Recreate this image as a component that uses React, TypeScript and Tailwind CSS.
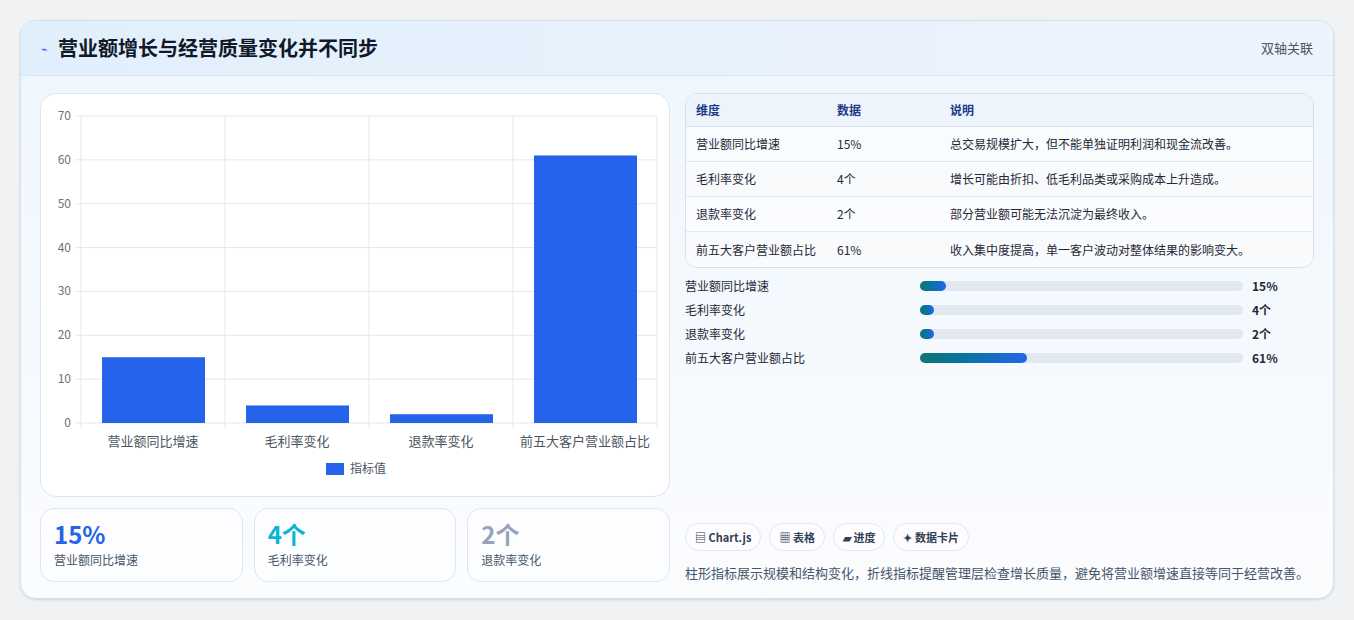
import React from "react";

const F = { fontFamily: '"Noto Sans CJK SC","Noto Sans",sans-serif' };

function Chart() {
  const x0 = 40, y0 = 22, h = 307, w = 576; // within svg coords
  const unit = h / 70;
  const vals = [15, 4, 2, 61];
  const labels = ["营业额同比增速", "毛利率变化", "退款率变化", "前五大客户营业额占比"];
  return (
    <svg width="628" height="402" className="block">
      {[0, 10, 20, 30, 40, 50, 60, 70].map((v) => {
        const y = y0 + h - v * unit;
        return (
          <g key={v}>
            <line x1={x0 - 6} x2={x0 + w} y1={y} y2={y} stroke="#e5e7eb" />
            <text x={x0 - 10} y={y + 4} textAnchor="end" fontSize="12" fill="#6b7280">{v}</text>
          </g>
        );
      })}
      {[0, 1, 2, 3, 4].map((i) => (
        <line key={i} x1={x0 + i * 144} x2={x0 + i * 144} y1={y0} y2={y0 + h + 6} stroke="#e5e7eb" />
      ))}
      {vals.map((v, i) => (
        <rect key={i} x={x0 + i * 144 + 21} y={y0 + h - v * unit} width={103} height={v * unit} fill="#2563eb" />
      ))}
      {labels.map((l, i) => (
        <text key={i} x={x0 + i * 144 + 72} y={y0 + h + 23} textAnchor="middle" fontSize="13" fill="#4b5563">{l}</text>
      ))}
      <rect x={285} y={y0 + h + 40} width={18} height={12} fill="#2563eb" />
      <text x={309} y={y0 + h + 50} fontSize="12" fill="#4b5563">指标值</text>
    </svg>
  );
}

const rows = [
  ["营业额同比增速", "15%", "总交易规模扩大，但不能单独证明利润和现金流改善。"],
  ["毛利率变化", "4个", "增长可能由折扣、低毛利品类或采购成本上升造成。"],
  ["退款率变化", "2个", "部分营业额可能无法沉淀为最终收入。"],
  ["前五大客户营业额占比", "61%", "收入集中度提高，单一客户波动对整体结果的影响变大。"],
];
const bars: [string, string, number][] = [
  ["营业额同比增速", "15%", 26],
  ["毛利率变化", "4个", 14],
  ["退款率变化", "2个", 14],
  ["前五大客户营业额占比", "61%", 107],
];

export default function App() {
  return (
    <div style={F} className="w-[1354px] h-[620px] bg-[#f1f2f4] pt-[20px] pl-[20px]">
      <div className="w-[1314px] h-[579px] rounded-[16px] border border-[#cfe3ef] overflow-hidden bg-gradient-to-b from-[#eef6fd] to-[#fbfcfe] shadow-sm">
        <div className="h-[55px] flex items-center justify-between px-[20px] bg-gradient-to-r from-[#e1effc] to-[#eef4fd] border-b border-[#d6e6f3]">
          <div className="flex items-center gap-[10px]">
            <span className="text-[#2563eb] text-[11px]">⌁</span>
            <span className="text-[20px] font-bold text-[#111827]">营业额增长与经营质量变化并不同步</span>
          </div>
          <span className="text-[13px] text-[#4b5563]">双轴关联</span>
        </div>
        <div className="flex gap-[15px] px-[19px] pt-[17px]">
          <div className="w-[630px] flex flex-col gap-[11px]">
            <div className="h-[404px] rounded-[16px] border border-[#dde6ef] bg-white">
              <Chart />
            </div>
            <div className="flex gap-[11px]">
              {[["15%", "text-[#2563eb]", "营业额同比增速"], ["4个", "text-[#06b6d4]", "毛利率变化"], ["2个", "text-[#94a3b8]", "退款率变化"]].map(([v, c, l]) => (
                <div key={l} className="flex-1 h-[74px] rounded-[14px] border border-[#dde6ef] bg-white/60 px-[13px] pt-[10px]">
                  <div className={`text-[24px] leading-[30px] font-bold ${c}`}>{v}</div>
                  <div className="text-[12px] text-[#475569] mt-[2px]">{l}</div>
                </div>
              ))}
            </div>
          </div>
          <div className="w-[630px] flex flex-col">
            <div className="rounded-[12px] border border-[#d5e0ea] overflow-hidden bg-white/60 text-[12px]">
              <div className="flex h-[33px] items-center bg-[#eef4fc] border-b border-[#d5e0ea] font-bold text-[#1e3a8a]">
                <div className="w-[151px] pl-[10px]">维度</div><div className="w-[113px]">数据</div><div>说明</div>
              </div>
              {rows.map((r, i) => (
                <div key={i} className={`flex h-[35px] items-center text-[#1f2937] ${i < 3 ? "border-b border-[#e2e8f0]" : ""} ${i % 2 ? "bg-[#f8fafc]" : ""}`}>
                  <div className="w-[151px] pl-[10px]">{r[0]}</div><div className="w-[113px]">{r[1]}</div><div>{r[2]}</div>
                </div>
              ))}
            </div>
            <div className="flex flex-col gap-[10px] mt-[11px]">
              {bars.map(([l, v, w]) => (
                <div key={l} className="flex items-center h-[14px] text-[12px] text-[#1f2937]">
                  <div className="w-[235px]">{l}</div>
                  <div className="w-[323px] h-[10px] rounded-full bg-[#e2e8f0]">
                    <div className="h-full rounded-full bg-gradient-to-r from-[#0f766e] to-[#2563eb]" style={{ width: w }} />
                  </div>
                  <div className="ml-[9px] font-bold">{v}</div>
                </div>
              ))}
            </div>
            <div className="flex-1" />
            <div className="flex gap-[8px] mt-[158px]">
              {["▤ Chart.js", "▦ 表格", "▰ 进度", "✦ 数据卡片"].map((t) => (
                <span key={t} className="h-[28px] px-[9px] flex items-center rounded-full border border-[#e2e8f0] bg-white/60 text-[11px] font-bold text-[#334155]">{t}</span>
              ))}
            </div>
            <div className="mt-[12px] text-[13px] text-[#475569]">柱形指标展示规模和结构变化，折线指标提醒管理层检查增长质量，避免将营业额增速直接等同于经营改善。</div>
          </div>
        </div>
      </div>
    </div>
  );
}
